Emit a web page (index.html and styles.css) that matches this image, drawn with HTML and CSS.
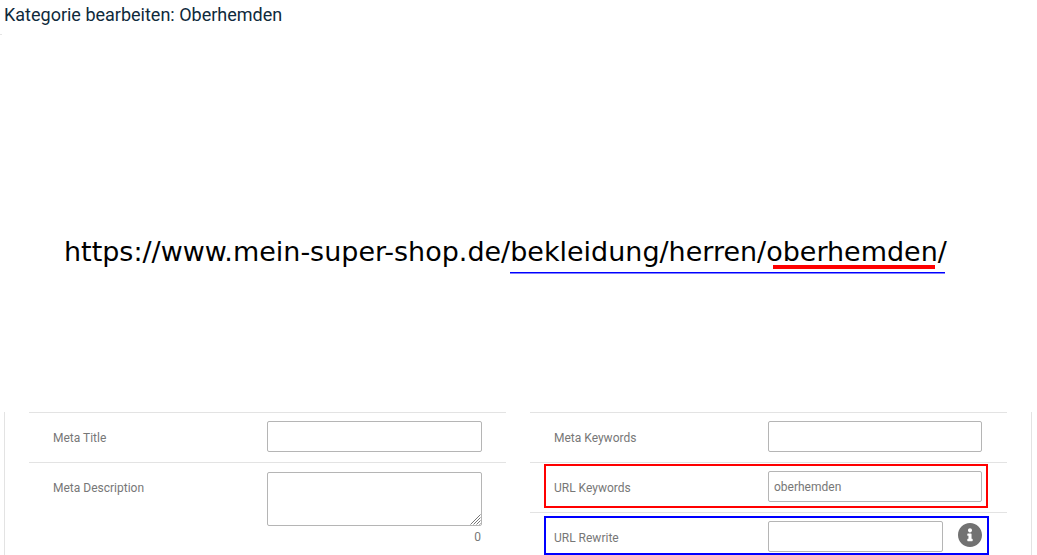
FILE: index.html
```html
<!DOCTYPE html>
<html lang="de">
<head>
<meta charset="utf-8">
<title>Kategorie bearbeiten: Oberhemden</title>
<link rel="stylesheet" href="styles.css">
</head>
<body>
<header class="header"><h1 class="title">Kategorie bearbeiten: Oberhemden</h1></header>
<main>
  <section class="example">
    <div class="url">https://www.mein-super-shop.de/bekleidung/herren/oberhemden/
      <span class="mark mark-keyword"></span>
      <span class="mark mark-path"></span>
    </div>
  </section>
  <form class="panel">
    <div class="column">
      <div class="row">
        <label class="label" for="title">Meta Title</label>
        <input class="field" id="title" type="text">
      </div>
      <div class="row row-area">
        <label class="label" for="description">Meta Description</label>
        <div class="area">
          <textarea class="field field-area" id="description"></textarea>
          <svg class="grip" viewBox="0 0 11 11"><path d="M0.5 10.5l10-10M3.5 10.5l7-7M6.5 10.5l4-4M9.5 10.5l1-1"/></svg>
          <span class="count">0</span>
        </div>
      </div>
    </div>
    <div class="column column-right">
      <div class="row">
        <label class="label" for="keywords">Meta Keywords</label>
        <input class="field" id="keywords" type="text">
      </div>
      <div class="row">
        <label class="label" for="url-keywords">URL Keywords</label>
        <input class="field" id="url-keywords" type="text" value="oberhemden">
        <span class="frame frame-red"></span>
      </div>
      <div class="row">
        <label class="label" for="rewrite">URL Rewrite</label>
        <input class="field field-short" id="rewrite" type="text">
        <svg class="info" viewBox="8 8 496 496"><path d="M256 8C119.043 8 8 119.083 8 256c0 136.997 111.043 248 248 248s248-111.003 248-248C504 119.083 392.957 8 256 8zm0 110c23.196 0 42 18.804 42 42s-18.804 42-42 42-42-18.804-42-42 18.804-42 42-42zm56 254c0 6.627-5.373 12-12 12h-88c-6.627 0-12-5.373-12-12v-24c0-6.627 5.373-12 12-12h12v-64h-12c-6.627 0-12-5.373-12-12v-24c0-6.627 5.373-12 12-12h64c6.627 0 12 5.373 12 12v100h12c6.627 0 12 5.373 12 12v24z"/></svg>
        <span class="frame frame-blue"></span>
      </div>
    </div>
  </form>
</main>
</body>
</html>
```
FILE: styles.css
```css
* { box-sizing: border-box; }
body {
  margin: 0;
  height: 555px;
  overflow: hidden;
  background: #fff;
  color: #777;
  font: 12px/18px Roboto, sans-serif;
}
.header {
  height: 35px;
  padding: 4px;
}
.title {
  margin: 0;
  color: #0f2a3c;
  font-size: 18px;
  font-weight: 400;
  line-height: 22px;
}
.header::after {
  content: "";
  display: block;
  width: 2px;
  height: 1px;
  margin: 8px 0 0 -4px;
  background: #e5e5e5;
}
.example {
  height: 377px;
  padding: 200px 0 0 64px;
}
.url {
  position: relative;
  width: 884px;
  height: 34px;
  color: #000;
  font: 26.98px/34px "DejaVu Sans", sans-serif;
  white-space: nowrap;
}
.mark { position: absolute; }
.mark-keyword {
  left: 709px;
  top: 30px;
  width: 162px;
  height: 4px;
  background: #f00;
}
.mark-path {
  left: 446px;
  top: 37px;
  width: 435px;
  height: 2px;
  background: linear-gradient(#00f 50%, #8080ff 50%);
}
.panel {
  display: grid;
  grid-template-columns: 477px 477px;
  column-gap: 24px;
  width: 1028px;
  height: 143px;
  margin-left: 4px;
  padding-left: 24px;
  border: solid #e3e3e3;
  border-width: 0 1px;
}
.row {
  position: relative;
  display: grid;
  grid-template-columns: 214px 215px;
  align-items: start;
  height: 50px;
  padding: 8px 24px;
  border-top: 1px solid #e3e3e3;
}
.column-right .row { grid-template-columns: 214px 214px; }
.row-area { height: 93px; padding-top: 9px; }
.label { padding-top: 8px; }
.row-area .label { padding-top: 7px; }
.field {
  width: 100%;
  height: 31px;
  margin: 0;
  padding: 0 5px;
  border: 1px solid #b5b5b5;
  border-radius: 2px;
  outline: 0;
  background: #fff;
  color: #777;
  font: inherit;
}
.field-short { width: 175px; }
.area { position: relative; display: flex; flex-direction: column; }
.field-area { height: 54px; resize: none; }
.grip {
  position: absolute;
  right: 1px;
  top: 42px;
  width: 11px;
  height: 11px;
  fill: none;
  stroke: #777;
  stroke-width: 1;
}
.count { margin-top: 2px; padding-right: 1px; text-align: right; }
.info {
  position: absolute;
  left: 428px;
  top: 10px;
  width: 24px;
  height: 24px;
  fill: #727272;
}
.frame {
  position: absolute;
  left: 14px;
  border: 2px solid #f00;
}
.frame-red { top: 1px; width: 444px; height: 44px; }
.frame-blue { top: 3px; width: 445px; height: 39px; border-color: #00f; }
```
